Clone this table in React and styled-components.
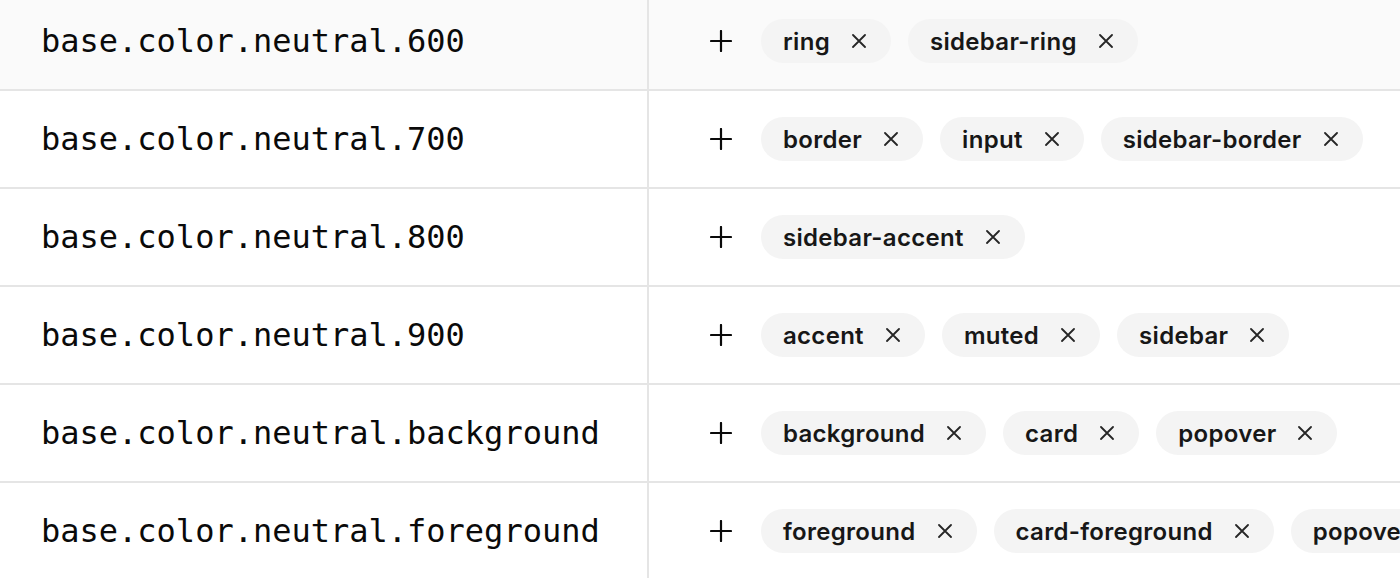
import React from "react";
import styled, { createGlobalStyle } from "styled-components";

const Global = createGlobalStyle`
  html, body { margin: 0; padding: 0; background: #ffffff; overflow: hidden; }
  body { width: 1400px; height: 578px; }
`;

const Table = styled.div`
  width: 1400px;
  margin-top: -7px;
  overflow: hidden;
`;

const Row = styled.div`
  display: grid;
  grid-template-columns: 649px 1fr;
  height: 96px;
  border-bottom: 2px solid #e5e5e5;
  background: ${(p) => (p.$highlight ? "#fafafa" : "#ffffff")};
`;

const NameCell = styled.div`
  display: flex;
  align-items: center;
  padding-left: 41px;
  border-right: 2px solid #e5e5e5;
  font-family: "DejaVu Sans Mono", monospace;
  font-size: 32px;
  color: #0a0a0a;
  white-space: nowrap;
`;

const TagCell = styled.div`
  display: flex;
  align-items: center;
  padding-left: 61px;
  gap: 17px;
  overflow: hidden;
  white-space: nowrap;
`;

const AddButton = styled.button`
  display: flex;
  align-items: center;
  justify-content: center;
  width: 22px;
  height: 22px;
  padding: 0;
  margin-right: 12px;
  border: none;
  background: none;
  color: #0a0a0a;
  flex-shrink: 0;
`;

const Chip = styled.span`
  display: inline-flex;
  align-items: center;
  flex-shrink: 0;
  height: 44px;
  padding: 0 25px 0 22px;
  border-radius: 22px;
  background: #f4f4f4;
  font-family: Inter, "Liberation Sans", sans-serif;
  font-weight: 600;
  font-size: 24px;
  letter-spacing: 0.3px;
  color: #171717;
`;

const Remove = styled.span`
  display: flex;
  margin-left: 22px;
  color: #262626;
`;

const PlusIcon = () => (
  <svg width="22" height="22" viewBox="0 0 22 22" fill="none" stroke="currentColor" strokeWidth="2.2" strokeLinecap="round">
    <path d="M1 11h20M11 1v20" />
  </svg>
);

const XIcon = () => (
  <svg width="14" height="14" viewBox="0 0 14 14" fill="none" stroke="currentColor" strokeWidth="1.8" strokeLinecap="round">
    <path d="M1 1l12 12M13 1L1 13" />
  </svg>
);

const rows = [
  { name: "base.color.neutral.600", tags: ["ring", "sidebar-ring"] },
  { name: "base.color.neutral.700", tags: ["border", "input", "sidebar-border"] },
  { name: "base.color.neutral.800", tags: ["sidebar-accent"] },
  { name: "base.color.neutral.900", tags: ["accent", "muted", "sidebar"] },
  { name: "base.color.neutral.background", tags: ["background", "card", "popover"] },
  { name: "base.color.neutral.foreground", tags: ["foreground", "card-foreground", "popover-foreground"] },
];

export default function App() {
  return (
    <>
      <Global />
      <Table>
        {rows.map((r, i) => (
          <Row key={r.name} $highlight={i === 0}>
            <NameCell>{r.name}</NameCell>
            <TagCell>
              <AddButton aria-label="add">
                <PlusIcon />
              </AddButton>
              {r.tags.map((t) => (
                <Chip key={t}>
                  {t}
                  <Remove>
                    <XIcon />
                  </Remove>
                </Chip>
              ))}
            </TagCell>
          </Row>
        ))}
      </Table>
    </>
  );
}
